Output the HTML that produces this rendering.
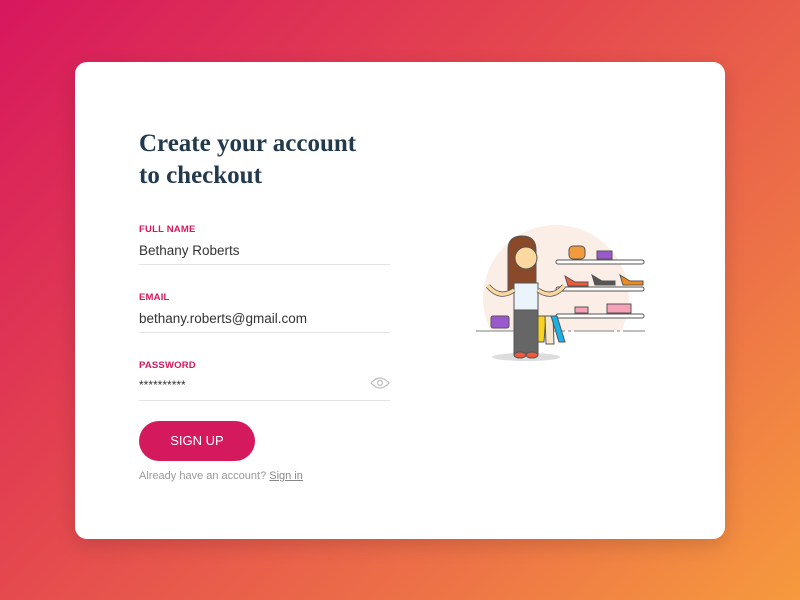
<!DOCTYPE html>
<html><head><style>
html,body{margin:0;padding:0;width:800px;height:600px;overflow:hidden}
body{background:linear-gradient(135deg,#d7175e 0%,#e4464f 40%,#ec6e48 70%,#f69a3e 100%);font-family:"Liberation Sans",sans-serif;position:relative}
.card{position:absolute;left:75px;top:62px;width:650px;height:477px;background:#fff;border-radius:12px;box-shadow:0 6px 20px rgba(0,0,0,.15)}
h1{position:absolute;left:64px;top:66px;margin:0;font-family:"Liberation Serif",serif;font-weight:bold;font-size:25px;line-height:32px;color:#233a4d}
.lab{position:absolute;left:64px;font-size:9.5px;font-weight:bold;color:#d4195d;letter-spacing:.2px}
.val{position:absolute;left:64px;font-size:13.5px;color:#333}
.ln{position:absolute;left:64px;width:251px;height:1px;background:#e4e4e4}
.btn{position:absolute;left:64px;top:359px;width:116px;height:40px;border-radius:20px;background:#d4195d;color:#fff;font-size:13px;text-align:center;line-height:40px}
.al{position:absolute;left:64px;top:408px;font-size:11px;color:#999}
.al u{color:#888}
</style></head><body>
<div class="card">
<h1>Create your account<br>to checkout</h1>
<div class="lab" style="top:162px">FULL NAME</div>
<div class="val" style="top:181px">Bethany Roberts</div>
<div class="ln" style="top:202px"></div>
<div class="lab" style="top:230px">EMAIL</div>
<div class="val" style="top:249px">bethany.roberts@gmail.com</div>
<div class="ln" style="top:270px"></div>
<div class="lab" style="top:298px">PASSWORD</div>
<div class="val" style="top:316px;font-size:12px">**********</div>
<svg style="position:absolute;left:295px;top:314px" width="20" height="14" viewBox="0 0 20 14"><path d="M1 7Q10-3 19 7Q10 17 1 7Z" fill="none" stroke="#bbb" stroke-width="1.2"/><circle cx="10" cy="7" r="2.5" fill="none" stroke="#bbb" stroke-width="1.2"/></svg>
<div class="ln" style="top:338px"></div>
<div class="btn">SIGN UP</div>
<div class="al">Already have an account? <u>Sign in</u></div>
<svg style="position:absolute;left:395px;top:158px" width="180" height="145" viewBox="470 220 180 145">
<defs><clipPath id="c"><rect x="470" y="200" width="200" height="131"/></clipPath></defs>
<circle cx="556" cy="298" r="73" fill="#fbeee6" clip-path="url(#c)"/>
<path d="M476 331H645" stroke="#999" stroke-width="1.2" stroke-dasharray="40 3 3 3"/>
<ellipse cx="526" cy="357" rx="34" ry="4" fill="#ddd"/>
<g stroke="#555" stroke-width="1"><rect x="556" y="260" width="88" height="4" rx="2" fill="#fff"/><rect x="556" y="287" width="88" height="4" rx="2" fill="#fff"/><rect x="556" y="314" width="88" height="4" rx="2" fill="#fff"/>
<rect x="569" y="246" width="16" height="13" rx="4" fill="#f29a3c"/><rect x="597" y="251" width="15" height="8" fill="#9b59d0"/>
<path d="M565 276l10 6h13v4h-20z" fill="#ee5a3c"/><path d="M592 275l10 6h13v4h-20z" fill="#555"/><path d="M620 275l10 6h13v4h-20z" fill="#f28a1e"/>
<path d="M575 307h13v6h-13z" fill="#f7a1b8"/><rect x="607" y="304" width="24" height="9" fill="#f7a1b8"/>
<path d="M508 250q0-14 14-14t14 14v40h-28z" fill="#8a4a2a"/>
<rect x="514" y="283" width="24" height="28" fill="#eaf4fa"/>
<rect x="514" y="310" width="24" height="45" fill="#666"/>
<ellipse cx="520" cy="355" rx="6" ry="3" fill="#ee5a3c"/><ellipse cx="532" cy="355" rx="6" ry="3" fill="#ee5a3c"/>
<circle cx="526" cy="258" r="11" fill="#fbd8a0"/>
<path d="M514 290q-14 10-26 -4" fill="none" stroke-width="5"/><path d="M538 290q14 10 26 -4" fill="none" stroke-width="5"/>
<rect x="491" y="316" width="18" height="12" rx="2" fill="#9b59d0"/>
<path d="M538 316h8l-2 26h-6z" fill="#f8d21c"/><path d="M545 316h8l1 28h-8z" fill="#f5e6d0"/><path d="M551 316h6l8 26h-6z" fill="#1ab0e8"/>
</g>
<path d="M514 290q-14 10-26 -4M538 290q14 10 26 -4" fill="none" stroke="#fbd8a0" stroke-width="3.5"/>
</svg>
</div>
</body></html>
